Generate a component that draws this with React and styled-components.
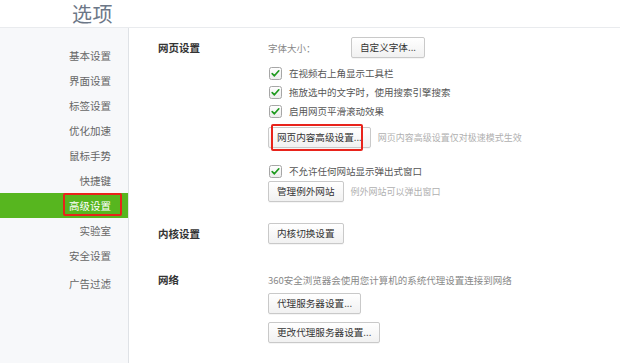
import React from 'react';
import styled, { createGlobalStyle } from 'styled-components';

const GlobalStyle = createGlobalStyle`
  body {
    margin: 0;
    background: #fff;
    font-family: "Noto Sans CJK SC", "Noto Sans", sans-serif;
  }
`

const menu = ['基本设置', '界面设置', '标签设置', '优化加速', '鼠标手势', '快捷键', '高级设置', '实验室', '安全设置', '广告过滤']

const CheckBox = () => (
  <svg width="13" height="13" viewBox="0 0 13 13">
    <defs>
      <linearGradient id="cbg" x1="0" y1="0" x2="0" y2="1">
        <stop offset="0" stopColor="#ffffff" />
        <stop offset="1" stopColor="#ececec" />
      </linearGradient>
    </defs>
    <rect x="0.5" y="0.5" width="12" height="12" rx="2" fill="url(#cbg)" stroke="#a6a6a6" />
    <path d="M3.2 6.6 L5.4 8.8 L9.8 3.8" fill="none" stroke="#1e9a1e" strokeWidth="1.7" strokeLinecap="round" strokeLinejoin="round" />
  </svg>
)

const Check = ({ children, top }) => (
  <CheckRow top={top}>
    <CheckBox />
    <span>{children}</span>
  </CheckRow>
)

export default function App () {
  return (
    <Page>
      <GlobalStyle />
      <Header>
        <HeaderTitle>选项</HeaderTitle>
      </Header>
      <Body>
        <Sidebar>
          {menu.map((m, i) => (
            <SideItem key={m} active={m === '高级设置'} last={i === menu.length - 1}>
              {m}
              {m === '高级设置' && <SideMark />}
            </SideItem>
          ))}
        </Sidebar>
        <Main>
          <Section>
            <SectionTitle h={21}>网页设置</SectionTitle>
            <Controls>
              <Row>
                <Label>字体大小：</Label>
                <Button>自定义字体...</Button>
              </Row>
              <Check top={6}>在视频右上角显示工具栏</Check>
              <Check top={1}>拖放选中的文字时，使用搜索引擎搜索</Check>
              <Check top={1}>启用网页平滑滚动效果</Check>
              <Row top={7}>
                <Marked>
                  <Button>网页内容高级设置...</Button>
                  <ButtonMark />
                </Marked>
                <Hint>网页内容高级设置仅对极速模式生效</Hint>
              </Row>
              <Check top={14}>不允许任何网站显示弹出式窗口</Check>
              <Row top={1}>
                <Button>管理例外网站</Button>
                <Hint>例外网站可以弹出窗口</Hint>
              </Row>
            </Controls>
          </Section>

          <Section top={21}>
            <SectionTitle h={21}>内核设置</SectionTitle>
            <Controls>
              <Row>
                <Button>内核切换设置</Button>
              </Row>
            </Controls>
          </Section>

          <Section top={28}>
            <SectionTitle h={16}>网络</SectionTitle>
            <Controls>
              <Note>360安全浏览器会使用您计算机的系统代理设置连接到网络</Note>
              <Row top={5}>
                <Button>代理服务器设置...</Button>
              </Row>
              <Row top={8}>
                <Button>更改代理服务器设置...</Button>
              </Row>
            </Controls>
          </Section>
        </Main>
      </Body>
    </Page>
  )
}

const Page = styled.div`
  width: 620px;
  height: 363px;
  overflow: hidden;
  display: flex;
  flex-direction: column;
  background: #fff;
`

const Header = styled.div`
  height: 27px;
  flex: none;
  border-bottom: 1px solid #e9ebee;
  display: flex;
  align-items: center;
`

const HeaderTitle = styled.div`
  width: 129px;
  box-sizing: border-box;
  padding-right: 16px;
  text-align: right;
  font-size: 20px;
  line-height: 27px;
  color: #6c7787;
  letter-spacing: 0.5px;
`

const Body = styled.div`
  flex: 1;
  display: grid;
  grid-template-columns: 129px 1fr;
`

const Sidebar = styled.div`
  background: #f7f8fa;
  border-right: 1px solid #dfe2e6;
  padding-top: 15px;
  box-sizing: border-box;
`

const SideItem = styled.div`
  position: relative;
  height: 25px;
  line-height: 25px;
  padding-right: 17px;
  margin-top: ${p => (p.last ? 3 : 0)}px;
  text-align: right;
  font-size: 10.5px;
  color: ${p => (p.active ? '#ffffff' : '#666')};
  background: ${p => (p.active ? '#57b61f' : 'transparent')};
`

const SideMark = styled.span`
  position: absolute;
  left: 63px;
  right: 6px;
  top: 0;
  bottom: 2px;
  border: 2px solid #e8231b;
  border-radius: 2px;
`

const Main = styled.div`
  padding: 9px 0 0 29px;
  display: flex;
  flex-direction: column;
`

const Section = styled.div`
  display: grid;
  grid-template-columns: 110px 1fr;
  margin-top: ${p => p.top || 0}px;
`

const SectionTitle = styled.div`
  font-size: 10.5px;
  font-weight: bold;
  color: #333;
  height: ${p => p.h}px;
  line-height: ${p => p.h}px;
`

const Controls = styled.div`
  display: flex;
  flex-direction: column;
  align-items: flex-start;
`

const Row = styled.div`
  display: flex;
  align-items: center;
  margin-top: ${p => p.top || 0}px;
`

const Label = styled.span`
  width: 83px;
  font-size: 9.5px;
  color: #888;
`

const Button = styled.div`
  height: 21px;
  box-sizing: border-box;
  padding: 0 8px;
  border: 1px solid #c9c9c9;
  border-radius: 2px;
  background: linear-gradient(#ffffff, #f1f1f1);
  box-shadow: 0 1px 0 rgba(0, 0, 0, 0.04);
  font-size: 9.6px;
  line-height: 19px;
  color: #333;
  white-space: nowrap;
`

const Marked = styled.div`
  position: relative;
`

const ButtonMark = styled.span`
  position: absolute;
  left: 3px;
  right: 8px;
  top: -3px;
  bottom: -3px;
  border: 2px solid #e8231b;
  border-radius: 2px;
`

const Hint = styled.span`
  margin-left: 7px;
  font-size: 9px;
  color: #b0b0b0;
`

const CheckRow = styled.div`
  height: 18px;
  display: flex;
  align-items: center;
  gap: 7px;
  margin-top: ${p => p.top || 0}px;
  padding-left: 1px;
  font-size: 9.5px;
  color: #555;
`

const Note = styled.div`
  height: 16px;
  line-height: 16px;
  font-size: 9.5px;
  color: #888;
`
